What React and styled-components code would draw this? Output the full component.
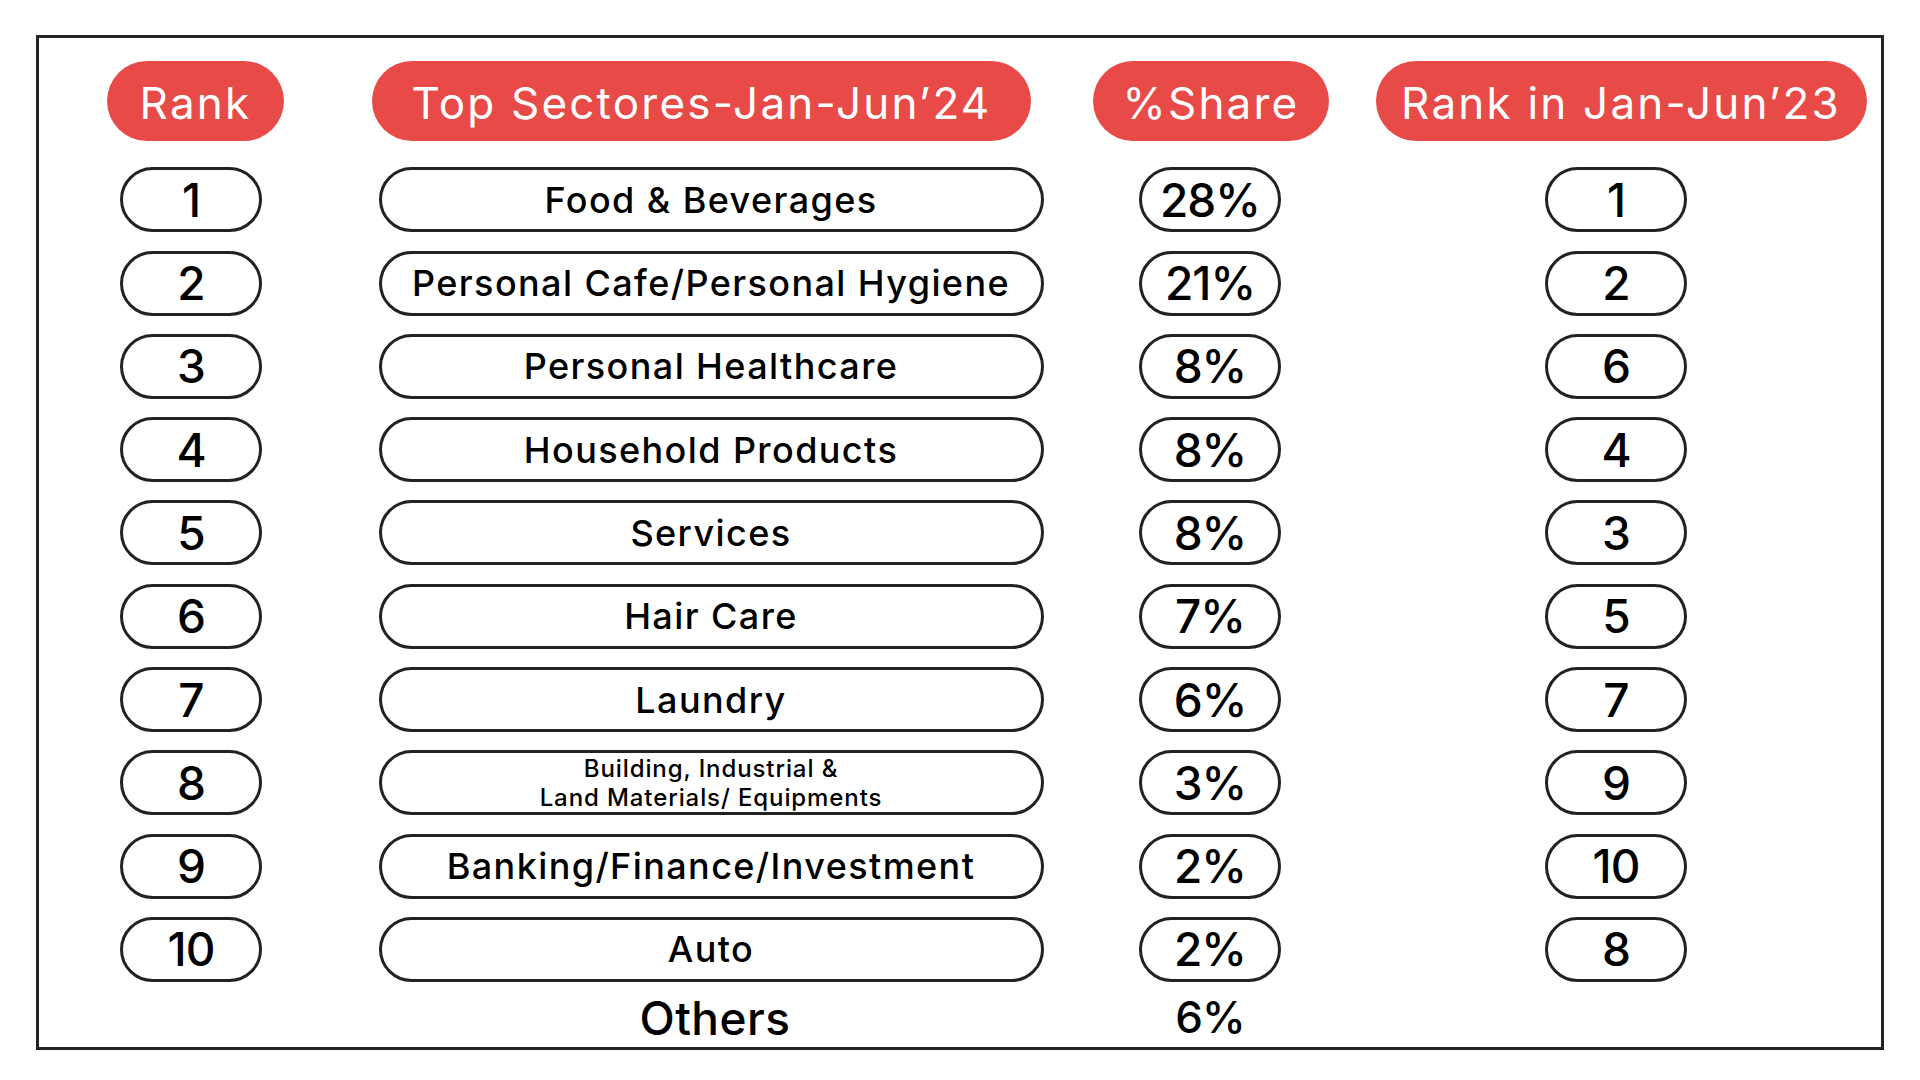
import React from 'react';
import styled, { createGlobalStyle } from 'styled-components';

const rows = [
  { rank: '1', sector: 'Food & Beverages', share: '28%', prev: '1' },
  { rank: '2', sector: 'Personal Cafe/Personal Hygiene', share: '21%', prev: '2' },
  { rank: '3', sector: 'Personal Healthcare', share: '8%', prev: '6' },
  { rank: '4', sector: 'Household Products', share: '8%', prev: '4' },
  { rank: '5', sector: 'Services', share: '8%', prev: '3' },
  { rank: '6', sector: 'Hair Care', share: '7%', prev: '5' },
  { rank: '7', sector: 'Laundry', share: '6%', prev: '7' },
  { rank: '8', sector: ['Building, Industrial &', 'Land Materials/ Equipments'], share: '3%', prev: '9' },
  { rank: '9', sector: 'Banking/Finance/Investment', share: '2%', prev: '10' },
  { rank: '10', sector: 'Auto', share: '2%', prev: '8' },
];

export default function App() {
  return (
    <>
      <GlobalStyle />
      <Frame>
        <Table>
          <HeadPill $w={177} $ml={9}>Rank</HeadPill>
          <HeadPill $w={659} $mr={19}>Top Sectores-Jan-Jun’24</HeadPill>
          <HeadPill $w={236} $ml={2}>%Share</HeadPill>
          <HeadPill $w={491} $ml={20}>Rank in Jan-Jun’23</HeadPill>

          {rows.map((r) => (
            <React.Fragment key={r.rank}>
              <NumPill>{r.rank}</NumPill>
              <SectorPill>
                {Array.isArray(r.sector) ? (
                  <SmallText>
                    {r.sector[0]}
                    <br />
                    {r.sector[1]}
                  </SmallText>
                ) : (
                  r.sector
                )}
              </SectorPill>
              <NumPill>{r.share}</NumPill>
              <NumPill $ml={10}>{r.prev}</NumPill>
            </React.Fragment>
          ))}

          <span />
          <OthersLabel>Others</OthersLabel>
          <OthersValue>6%</OthersValue>
          <span />
        </Table>
      </Frame>
    </>
  );
}

const GlobalStyle = createGlobalStyle`
  html, body {
    margin: 0;
    padding: 0;
    background: #ffffff;
  }
  body {
    font-family: Inter, "Noto Sans", sans-serif;
    color: #000;
  }
`;

const Frame = styled.div`
  box-sizing: border-box;
  margin: 35px 0 0 36px;
  width: 1848px;
  height: 1015px;
  border: 3px solid #222222;
`;

const Table = styled.div`
  display: grid;
  grid-template-columns: 304px 736px 262px 540px;
  grid-template-rows: 88px;
  grid-auto-rows: 65px;
  row-gap: 18.3px;
  justify-items: center;
  align-items: center;
  padding-top: 23px;
`;

const HeadPill = styled.div`
  box-sizing: border-box;
  align-self: start;
  width: ${(p) => p.$w}px;
  height: 80px;
  margin-left: ${(p) => p.$ml || 0}px;
  margin-right: ${(p) => p.$mr || 0}px;
  padding-top: 3px;
  border-radius: 40px;
  background: #e84a47;
  color: #ffffff;
  font-size: 44px;
  font-weight: 400;
  letter-spacing: 2.2px;
  display: flex;
  align-items: center;
  justify-content: center;
  white-space: nowrap;
`;

const Pill = styled.div`
  box-sizing: border-box;
  height: 65px;
  border: 3px solid #222222;
  border-radius: 33px;
  display: flex;
  align-items: center;
  justify-content: center;
  text-align: center;
  white-space: nowrap;
`;

const NumPill = styled(Pill)`
  width: 142px;
  margin-left: ${(p) => p.$ml || 0}px;
  font-size: 46px;
  font-weight: 500;
  letter-spacing: -1px;
`;

const SectorPill = styled(Pill)`
  width: 665px;
  font-size: 36px;
  font-weight: 500;
  letter-spacing: 1.4px;
`;

const SmallText = styled.span`
  font-size: 24px;
  line-height: 29px;
  letter-spacing: 0.9px;
`;

const OthersLabel = styled.div`
  font-size: 46px;
  font-weight: 500;
  letter-spacing: 0.5px;
  margin-top: -30px;
  margin-left: 8px;
`;

const OthersValue = styled.div`
  font-size: 44px;
  font-weight: 500;
  letter-spacing: -1px;
  margin-top: -32px;
`;
